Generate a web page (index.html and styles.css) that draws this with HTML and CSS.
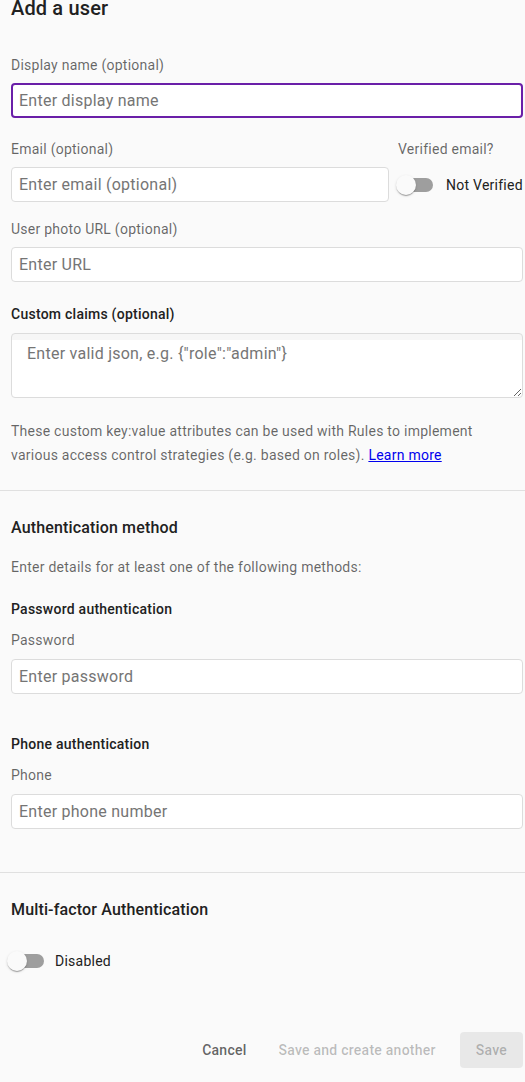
FILE: index.html
```html
<!DOCTYPE html>
<html lang="en">
<head>
<meta charset="utf-8">
<title>Add a user</title>
<link rel="stylesheet" href="styles.css">
</head>
<body>
<div class="page">
  <h1 class="title">Add a user</h1>

  <div class="field field-display">
    <label class="label" for="dn">Display name (optional)</label>
    <input id="dn" class="input focused" type="text" placeholder="Enter display name">
  </div>

  <div class="email-row">
    <div class="email-col">
      <label class="label" for="em">Email (optional)</label>
      <input id="em" class="input" type="text" placeholder="Enter email (optional)">
    </div>
    <div class="verify-col">
      <div class="label">Verified email?</div>
      <div class="toggle-row">
        <span class="toggle"><span class="track"></span><span class="thumb"></span></span>
        <span class="toggle-text">Not Verified</span>
      </div>
    </div>
  </div>

  <div class="field field-url">
    <label class="label" for="url">User photo URL (optional)</label>
    <input id="url" class="input" type="text" placeholder="Enter URL">
  </div>

  <div class="field field-claims">
    <label class="label strong claims-label" for="cc">Custom claims (optional)</label>
    <textarea id="cc" class="textarea" placeholder="Enter valid json, e.g. {&quot;role&quot;:&quot;admin&quot;}"></textarea>
  </div>

  <p class="help">These custom key:value attributes can be used with Rules to implement various access control strategies (e.g. based on roles). <a href="#" class="link">Learn more</a></p>

  <hr class="divider divider-1">

  <h2 class="heading heading-auth">Authentication method</h2>
  <p class="muted details">Enter details for at least one of the following methods:</p>

  <div class="sub strong sub-password">Password authentication</div>
  <div class="field">
    <label class="label sub-label" for="pw">Password</label>
    <input id="pw" class="input" type="text" placeholder="Enter password">
  </div>

  <div class="sub strong sub-phone">Phone authentication</div>
  <div class="field">
    <label class="label sub-label" for="ph">Phone</label>
    <input id="ph" class="input" type="text" placeholder="Enter phone number">
  </div>

  <hr class="divider divider-2">

  <h2 class="heading heading-mfa">Multi-factor Authentication</h2>
  <div class="toggle-row mfa-row">
    <span class="toggle"><span class="track"></span><span class="thumb"></span></span>
    <span class="toggle-text">Disabled</span>
  </div>

  <div class="actions">
    <button class="btn btn-cancel" type="button">Cancel</button>
    <button class="btn btn-disabled" type="button">Save and create another</button>
    <button class="btn btn-save" type="button">Save</button>
  </div>
</div>
</body>
</html>
```

FILE: styles.css
```css
* { box-sizing: border-box; }

body {
  margin: 0;
  background: #fafafa;
  font-family: Roboto, "Liberation Sans", Arial, sans-serif;
  color: #212121;
}

.page {
  padding: 0 2px 0 11px;
}

.title {
  margin: -2px 0 0;
  font-size: 20px;
  line-height: 20px;
  font-weight: 500;
  letter-spacing: 0.15px;
  color: #212121;
}

.label {
  display: block;
  font-size: 14px;
  line-height: 20px;
  letter-spacing: 0.25px;
  color: rgba(0, 0, 0, 0.6);
  margin-bottom: 8px;
}

.label.strong,
.strong {
  font-weight: 500;
  color: #212121;
}

.input {
  display: block;
  width: 100%;
  height: 35px;
  margin: 0;
  padding: 0 7px;
  border: 1px solid #dcdcdc;
  border-radius: 4px;
  background: #fff;
  font-family: inherit;
  font-size: 16px;
  letter-spacing: 0.25px;
  color: #212121;
  outline: none;
}

.input.focused {
  border: 2px solid #6a1fa8;
  padding: 0 6px;
}

.input::placeholder,
.textarea::placeholder {
  color: #757575;
  opacity: 1;
}

.field-display {
  margin-top: 37px;
}

.email-row {
  margin-top: 21px;
  display: grid;
  grid-template-columns: 1fr 126px;
  column-gap: 8px;
}

.verify-col .label {
  margin-bottom: 8px;
  padding-left: 1px;
  white-space: nowrap;
}

.verify-col .toggle-row {
  height: 35px;
}

.verify-col .toggle-text {
  margin-left: 13px;
}

.field-url {
  margin-top: 17px;
}

.field-claims {
  margin-top: 22px;
}

.claims-label {
  margin-bottom: 9px;
}

.textarea {
  display: block;
  width: 100%;
  height: 65px;
  margin: 0;
  padding: 10px 15px;
  border: 1px solid #dcdcdc;
  border-radius: 4px;
  background: linear-gradient(#f6f6f6 0, #f6f6f6 6px, #fff 6px);
  font-family: inherit;
  font-size: 16px;
  line-height: 19px;
  letter-spacing: 0.25px;
  color: #212121;
  outline: none;
  resize: vertical;
}

.help {
  margin: 21px 0 0;
  font-size: 14px;
  line-height: 24px;
  letter-spacing: 0.25px;
  color: rgba(0, 0, 0, 0.6);
  padding-right: 40px;
}

.link {
  color: #0000ee;
  text-decoration: underline;
}

.divider {
  border: 0;
  border-top: 1px solid #e0e0e0;
  margin: 0 -2px 0 -11px;
  height: 0;
}

.divider-1 {
  margin-top: 23px;
}

.heading {
  margin: 0;
  font-size: 16px;
  line-height: 24px;
  font-weight: 500;
  letter-spacing: 0.15px;
  color: #212121;
}

.heading-auth {
  margin-top: 25px;
}

.muted {
  color: rgba(0, 0, 0, 0.6);
}

.details {
  margin: 17px 0 0;
  font-size: 14px;
  line-height: 20px;
  letter-spacing: 0.25px;
}

.sub {
  font-size: 14px;
  line-height: 20px;
  letter-spacing: 0.25px;
}

.sub-password {
  margin-top: 22px;
}

.sub-phone {
  margin-top: 40px;
}

.sub-label {
  margin-top: 11px;
  margin-bottom: 9px;
}

.divider-2 {
  margin-top: 43px;
}

.heading-mfa {
  margin-top: 25px;
}

.toggle-row {
  display: flex;
  align-items: center;
}

.toggle {
  position: relative;
  display: inline-block;
  width: 36px;
  height: 14px;
  flex: none;
}

.track {
  display: block;
  width: 36px;
  height: 14px;
  border-radius: 7px;
  background: #9e9e9e;
}

.thumb {
  position: absolute;
  left: -1px;
  top: -3px;
  width: 20px;
  height: 20px;
  border-radius: 50%;
  background: #fafafa;
  box-shadow: 0 2px 1px -1px rgba(0, 0, 0, 0.2), 0 1px 1px 0 rgba(0, 0, 0, 0.14), 0 1px 3px 0 rgba(0, 0, 0, 0.12);
}

.toggle-text {
  margin-left: 11px;
  font-size: 14px;
  line-height: 20px;
  letter-spacing: 0.25px;
  color: #212121;
  white-space: nowrap;
}

.mfa-row {
  height: 24px;
  margin-top: 27px;
  margin-left: -3px;
}

.actions {
  margin-top: 59px;
  display: flex;
  justify-content: flex-end;
  gap: 8px;
}

.btn {
  height: 36px;
  padding: 0 16px;
  border: 0;
  border-radius: 4px;
  background: transparent;
  font-family: inherit;
  font-size: 14px;
  font-weight: 500;
  letter-spacing: 0.25px;
  line-height: 36px;
  cursor: pointer;
}

.btn-cancel {
  color: rgba(0, 0, 0, 0.62);
  margin-right: -8px;
}

.btn-disabled {
  color: rgba(0, 0, 0, 0.26);
}

.btn-save {
  background: rgba(0, 0, 0, 0.07);
  color: rgba(0, 0, 0, 0.26);
}
```
